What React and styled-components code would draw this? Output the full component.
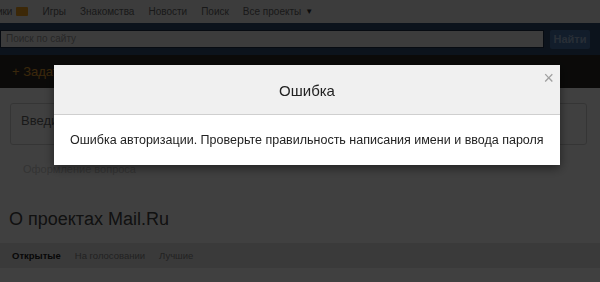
import React from 'react';
import styled, { createGlobalStyle } from 'styled-components';

const GlobalStyle = createGlobalStyle`
  html, body {
    margin: 0;
    padding: 0;
    background: #ffffff;
    font-family: "Liberation Sans", Arial, sans-serif;
    overflow: hidden;
  }
`;

const Page = styled.div`
  width: 600px;
  height: 282px;
  overflow: hidden;
  background: #ffffff;
`;

const TopNav = styled.div`
  height: 23px;
  background: #efefef;
  display: flex;
  align-items: center;
  gap: 14px;
  margin-left: -59px;
  font-size: 10px;
  color: #666;
`;

const NavItem = styled.span`
  display: flex;
  align-items: center;
  gap: 4px;
  white-space: nowrap;
`;

const Badge = styled.span`
  display: inline-block;
  width: 12px;
  height: 9px;
  background: #f0a020;
  border-radius: 1px;
`;

const Caret = styled.span`
  font-size: 8px;
  color: #333;
`;

const SearchBand = styled.div`
  height: 32px;
  background: #304c70;
  display: flex;
  align-items: center;
  gap: 6px;
  padding: 0 10px 0 0;
  box-sizing: border-box;
`;

const SearchInput = styled.div`
  width: 545px;
  height: 18px;
  background: #f0f0f0;
  border: 1px solid #1c2e44;
  box-sizing: border-box;
  font-size: 10px;
  color: #999;
  padding-left: 5px;
  line-height: 16px;
`;

const SearchButton = styled.div`
  width: 40px;
  height: 19px;
  background: #4874aa;
  border-radius: 2px;
  color: #9fb8d8;
  font-size: 11px;
  font-weight: bold;
  display: flex;
  align-items: center;
  justify-content: center;
`;

const AskBar = styled.div`
  height: 33px;
  background: #2c2a26;
  display: flex;
  align-items: center;
  padding-left: 12px;
  font-size: 13px;
  color: #e8a030;
`;

const Content = styled.div`
  padding: 15px 13px 0 10px;
`;

const Textarea = styled.div`
  height: 42px;
  border: 1px solid #d4d4d4;
  border-radius: 3px;
  box-sizing: border-box;
  padding: 9px 10px;
  font-size: 13px;
  color: #666;
`;

const Hint = styled.div`
  margin: 18px 0 0 13px;
  font-size: 11px;
  color: #ccc;
`;

const Heading = styled.h1`
  margin: 32px 0 0 -1px;
  font-weight: normal;
  font-size: 18px;
  color: #444;
  line-height: 24px;
`;

const Tabs = styled.div`
  margin-top: 12px;
  height: 25px;
  background: #e6e6e6;
  display: flex;
  align-items: center;
  gap: 14px;
  padding-left: 12px;
  font-size: 9.5px;
  color: #888;
  border-bottom: 9px solid #ffffff;
`;

const Tab = styled.span`
  color: ${p => (p.$active ? '#222' : '#888')};
  font-weight: ${p => (p.$active ? 'bold' : 'normal')};
`;

const Overlay = styled.div`
  position: fixed;
  inset: 0;
  background: rgba(0, 0, 0, 0.75);
  padding: 65px 0 0 54px;
  box-sizing: border-box;
`;

const Modal = styled.div`
  position: relative;
  width: 506px;
  background: #ffffff;
  box-shadow: 0 3px 10px rgba(0, 0, 0, 0.5);
`;

const ModalHeader = styled.div`
  height: 50px;
  background: #f0f0f0;
  border-bottom: 1px solid #cfcfcf;
  box-sizing: border-box;
  display: flex;
  align-items: center;
  justify-content: center;
  font-size: 15px;
  color: #222;
  padding-top: 2px;
`;

const Close = styled.span`
  position: absolute;
  top: 4px;
  right: 6px;
  font-size: 18px;
  color: #a0a0a0;
  line-height: 18px;
`;

const ModalBody = styled.div`
  height: 50px;
  display: flex;
  align-items: center;
  padding-left: 16px;
  font-size: 12.5px;
  color: #222;
  white-space: nowrap;
  padding-bottom: 1px;
  box-sizing: border-box;
`;

export default function App() {
  return (
    <>
      <GlobalStyle />
      <Page>
        <TopNav>
          <NavItem>Одноклассники <Badge /></NavItem>
          <NavItem>Игры</NavItem>
          <NavItem>Знакомства</NavItem>
          <NavItem>Новости</NavItem>
          <NavItem>Поиск</NavItem>
          <NavItem>Все проекты<Caret>▼</Caret></NavItem>
        </TopNav>
        <SearchBand>
          <SearchInput>Поиск по сайту</SearchInput>
          <SearchButton>Найти</SearchButton>
        </SearchBand>
        <AskBar>+ Задать вопрос</AskBar>
        <Content>
          <Textarea>Введите ваш вопрос</Textarea>
          <Hint>Оформление вопроса</Hint>
          <Heading>О проектах Mail.Ru</Heading>
        </Content>
        <Tabs>
          <Tab $active>Открытые</Tab>
          <Tab>На голосовании</Tab>
          <Tab>Лучшие</Tab>
        </Tabs>
      </Page>
      <Overlay>
        <Modal>
          <ModalHeader>Ошибка</ModalHeader>
          <Close>×</Close>
          <ModalBody>Ошибка авторизации. Проверьте правильность написания имени и ввода пароля</ModalBody>
        </Modal>
      </Overlay>
    </>
  );
}
